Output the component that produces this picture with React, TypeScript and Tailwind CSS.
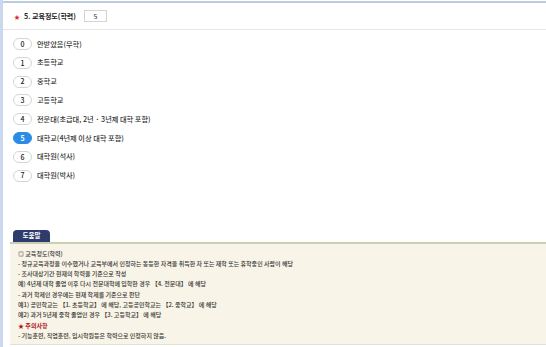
const options = [
  { value: "0", label: "안받았음(무학)" },
  { value: "1", label: "초등학교" },
  { value: "2", label: "중학교" },
  { value: "3", label: "고등학교" },
  { value: "4", label: "전문대(초급대, 2년 · 3년제 대학 포함)" },
  { value: "5", label: "대학교(4년제 이상 대학 포함)" },
  { value: "6", label: "대학원(석사)" },
  { value: "7", label: "대학원(박사)" },
];

const selected = "5";

export default function App() {
  return (
    <div
      className="w-[546px] h-[347px] bg-white overflow-hidden text-[#333]"
      style={{ fontFamily: '"Noto Sans CJK KR", "Noto Sans", sans-serif' }}
    >
      <div className="h-full border-l-[3px] border-[#c9d8ec] pt-[1px]">
        <div className="border-t-[2px] border-[#bccbde]">
          <div className="h-[27px] flex items-center pl-[11px] border-b border-[#e6e6e6]">
            <span className="text-[#d9262b] text-[6px] mr-[4px]">★</span>
            <span className="text-[7px] font-bold text-[#222]">5. 교육정도(학력)</span>
            <div className="ml-[8px] w-[23px] h-[12px] border border-[#d4d4d4] flex items-center justify-center text-[7px] text-[#333]">
              5
            </div>
          </div>

          <ul className="pl-[10px] pt-[8px] flex flex-col gap-[6.8px]">
            {options.map((o) => (
              <li key={o.value} className="flex items-center h-[12px]">
                <span
                  className={
                    o.value === selected
                      ? "w-[19px] h-[12px] rounded-full bg-[#2b8ce6] border border-[#2b8ce6] text-white flex items-center justify-center text-[7px] font-bold"
                      : "w-[19px] h-[12px] rounded-full bg-white border border-[#d4d4d4] text-[#222] flex items-center justify-center text-[7px] font-medium"
                  }
                >
                  {o.value}
                </span>
                <span className="ml-[5px] text-[7.2px] font-medium text-[#333]">{o.label}</span>
              </li>
            ))}
          </ul>
        </div>

        <div className="mt-[48px] pl-[7px]">
          <div className="ml-[3px] w-[37px] h-[12px] rounded-t-[4px] bg-[#2f3b6c] text-white text-[6.5px] font-bold flex items-center justify-center">
            도움말
          </div>
          <div className="bg-[#f8f4e7] border-t-[2px] border-[#cdcdb0] border-b border-b-[#e2e0d8] pl-[8px] pt-[5px] pb-[3px] text-[6px] font-medium leading-[10.3px] text-[#333]">
            <p>◎ 교육정도(학력)</p>
            <p>- 정규교육과정을 이수했거나 교육부에서 인정하는 동등한 자격을 취득한 자 또는 재학 또는 휴학중인 사람이 해당</p>
            <p>- 조사대상기간 현재의 학력을 기준으로 작성</p>
            <p>예) 4년제 대학 졸업 이후 다시 전문대학에 입학한 경우 【4. 전문대】 에 해당</p>
            <p>- 과거 학제인 경우에는 현재 학제를 기준으로 판단</p>
            <p>예1) 공민학교는 【1. 초등학교】 에 해당, 고등공민학교는 【2. 중학교】 에 해당</p>
            <p>예2) 과거 5년제 중학 졸업인 경우 【3. 고등학교】 에 해당</p>
            <p className="text-[#b3121b] font-bold">★ 주의사항</p>
            <p>- 기능훈련, 직업훈련, 입시학원등은 학력으로 인정하지 않음.</p>
          </div>
        </div>
      </div>
    </div>
  );
}
